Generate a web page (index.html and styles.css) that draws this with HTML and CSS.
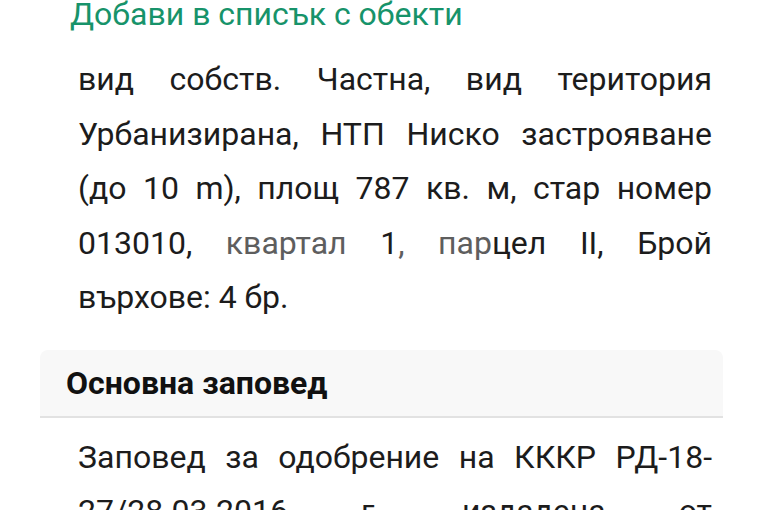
FILE: index.html
```html
<!DOCTYPE html>
<html lang="bg">
<head>
<meta charset="utf-8">
<title>Обект</title>
<link rel="stylesheet" href="styles.css">
</head>
<body>
<div class="page">
  <a class="add-link" href="#">Добави в списък с обекти</a>
  <section class="card">
    <p class="card-text">вид собств. Частна, вид територия Урбанизирана, НТП Ниско застрояване (до 10 m), площ 787 кв. м, стар номер 013010, <span class="faded">квартал</span> 1<span class="faded">,</span> <span class="faded">пар</span>цел II, Брой върхове: 4 бр.</p>
  </section>
  <section class="card">
    <header class="card-header">Основна заповед</header>
    <p class="card-text second">Заповед за одобрение на КККР РД-18-27/28.03.2016 г., издадена от Изпълнителен директор на АГКК</p>
  </section>
</div>
</body>
</html>
```

FILE: styles.css
```css
html, body {
  margin: 0;
  padding: 0;
  background: #ffffff;
  overflow: hidden;
}

body {
  font-family: Roboto, "Noto Sans", "Liberation Sans", sans-serif;
  color: #1c1c1c;
}

.page {
  width: 764px;
  height: 510px;
  overflow: hidden;
}

.add-link {
  display: block;
  padding-left: 70px;
  font-size: 32px;
  line-height: 28px;
  color: #17936a;
  text-decoration: none;
}

.card {
  margin: 0 41px 0 40px;
}

.card-text {
  margin: 0;
  padding: 24px 11px 0 38px;
  font-size: 32px;
  line-height: 54.5px;
  text-align: justify;
}

.faded {
  color: #5e5e5e;
}

.card-header {
  margin-top: 25px;
  padding-left: 26px;
  height: 66px;
  line-height: 66px;
  font-size: 32px;
  font-weight: 700;
  color: #111111;
  background: #f8f8f8;
  border-radius: 8px 8px 0 0;
  border-bottom: 2px solid #e2e2e2;
}

.card-text.second {
  padding-top: 12px;
}
```
